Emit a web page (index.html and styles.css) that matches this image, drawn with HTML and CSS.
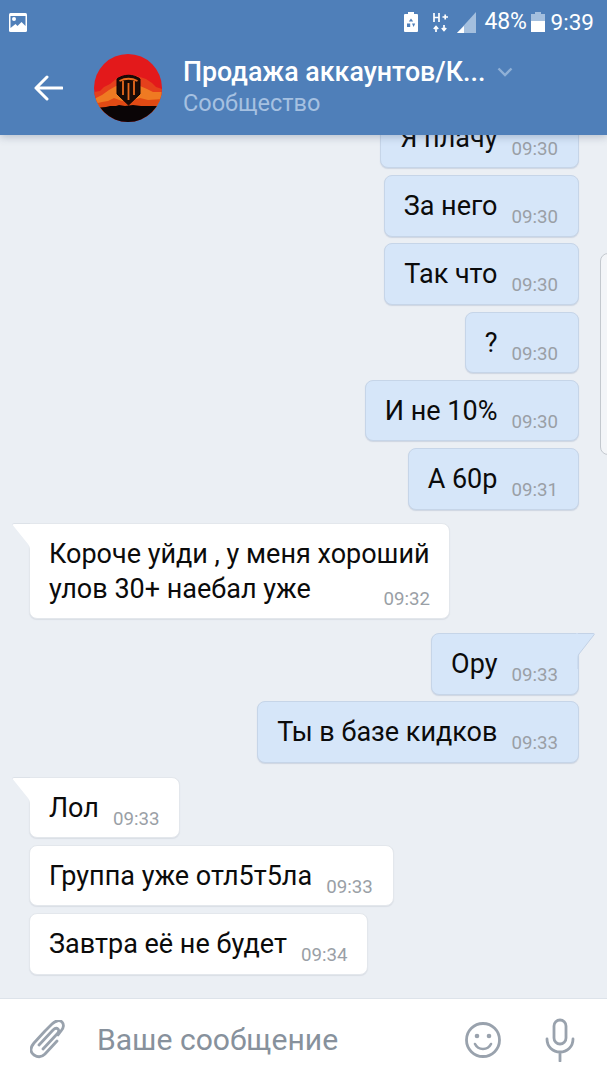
FILE: index.html
```html
<!DOCTYPE html>
<html lang="ru">
<head>
<meta charset="utf-8">
<title>Продажа аккаунтов</title>
<link rel="stylesheet" href="styles.css">
</head>
<body>
<div class="app">
  <header class="top">
    <div class="status">
      <svg class="st-pic" width="18" height="19" viewBox="0 0 18 19"><rect width="18" height="19" rx="1.5" fill="#fff"/><path d="M1.500 3h15v10l-4-4-4 4-2-2-5 4z" fill="#4f7fb9"/><circle cx="5" cy="6" r="2" fill="#fff"/></svg>
      <span class="st-right">
        <svg class="st-save" width="14" height="20" viewBox="0 0 14 20"><path d="M4 0h6v2h3a1 1 0 0 1 1 1v16a1 1 0 0 1-1 1H1a1 1 0 0 1-1-1V3a1 1 0 0 1 1-1h3z" fill="#fff"/><path d="M7 6.500l2.200 3H4.800zM3 11.500h3.200v3.500H3zM8 11.500h3.200L9.600 15z" fill="#4f7fb9"/></svg>
        <svg class="st-net" width="15" height="20" viewBox="0 0 15 20"><path d="M1 1v9M6 1v9M1 5.500h5M9.500 5h5.500M12.200 2.500v5" stroke="#fff" stroke-width="1.700" fill="none"/><path d="M3 20v-5M.8 17L3 14.500 5.200 17M11 13v5M8.800 16l2.200 2.500 2.200-2.500" stroke="#fff" stroke-width="1.700" fill="none"/></svg>
        <svg class="st-sig" width="19" height="21" viewBox="0 0 19 21"><path d="M19 0v21H0z" fill="#a4bfde"/><path d="M0 21l7-7v7z" fill="#fff"/></svg>
        <span class="st-pct">48%</span>
        <svg class="st-bat" width="14" height="20" viewBox="0 0 14 20"><path d="M4 0h6v2h4v18H0V2h4z" fill="#a4bfde"/><rect y="9" width="14" height="11" fill="#fff"/></svg>
        <span class="st-time">9:39</span>
      </span>
    </div>
    <div class="bar">
      <svg class="back" width="30" height="26" viewBox="0 0 30 26"><path d="M29 13H3M14 2L3 13l11 11" stroke="#fff" stroke-width="3" fill="none" stroke-linecap="round" stroke-linejoin="round"/></svg>
      <svg class="avatar" width="68" height="68" viewBox="0 0 68 68">
        <defs><clipPath id="c"><circle cx="34" cy="34" r="34"/></clipPath></defs>
        <g clip-path="url(#c)">
          <rect width="68" height="68" fill="#e3191b"/>
          <path d="M0 38l6-1 4-4 6-3 6-5 8-3 8-1 8 2 6 2 6 4 4 4 6 2v30H0z" fill="#e5401c"/>
          <path d="M0 45l8-4 7-5 7-4 24 0 7 3 6 3 9 0v20H0z" fill="#ef7a22"/>
          <path d="M0 50l8-2 6-1 6-3 8 3 10-1 8-2 8 2 14-1v12H0z" fill="#e04a14"/>
          <path d="M0 54l12-1 4-1 6 0 3-1 6 1 8-1 8 1 21 0v16H0z" fill="#0a0506"/>
          <path d="M23 25c7-5 16-5 23 0v15L34.500 51 23 40z" fill="#1a0b06" stroke="#0a0506" stroke-width="1"/>
          <path d="M25.500 27c6-3 12-3 18 0M29 27v14M40 27v14M34.500 29v17" stroke="#ea6a1e" stroke-width="1.800" fill="none"/>
        </g>
      </svg>
      <div class="titles">
        <div class="title-row">
          <span class="title">Продажа аккаунтов/К...</span>
          <svg class="chev" width="16" height="10" viewBox="0 0 16 10"><path d="M1.500 1.500L8 8l6.500-6.500" stroke="#8fb0d6" stroke-width="2.400" fill="none"/></svg>
        </div>
        <div class="sub">Сообщество</div>
      </div>
    </div>
  </header>

  <main class="chat">
    <div class="msg out"><span class="txt">Я плачу</span><span class="tm">09:30</span></div>
    <div class="msg out"><span class="txt">За него</span><span class="tm">09:30</span></div>
    <div class="msg out"><span class="txt">Так что</span><span class="tm">09:30</span></div>
    <div class="msg out"><span class="txt">?</span><span class="tm">09:30</span></div>
    <div class="msg out"><span class="txt">И не 10%</span><span class="tm">09:30</span></div>
    <div class="msg out"><span class="txt">А 60р</span><span class="tm">09:31</span></div>

    <div class="msg in first multi">
      <svg class="tail tail-in" width="20" height="36" viewBox="0 0 20 36"><path d="M18 1H1.500c-.8 0-1 .6-.6 1.200L16 21c1 1.500 2 3 2 6v9h2V1z" fill="#fff"/><path d="M18 .5H1.500c-.8 0-1 .6-.6 1.200" stroke="#dde2e8" fill="none"/></svg>
      <span class="txt">Короче уйди , у меня хороший<br>улов 30+ наебал уже</span><span class="tm">09:32</span>
    </div>

    <div class="msg out first">
      <svg class="tail tail-out" width="20" height="36" viewBox="0 0 20 36"><path d="M2 .500h15.500c.8 0 1 .6.600 1.200L3 21c-1 1.500-1 3-1 6v9H0V.500z" fill="#d6e6f9"/><path d="M2 .500h15.500c.8 0 1 .6.600 1.200L3 21c-1 1.500-1 3-1 6v9" fill="none" stroke="#c3d2e6"/></svg>
      <span class="txt">Ору</span><span class="tm">09:33</span>
    </div>
    <div class="msg out"><span class="txt">Ты в базе кидков</span><span class="tm">09:33</span></div>

    <div class="msg in first">
      <svg class="tail tail-in" width="20" height="36" viewBox="0 0 20 36"><path d="M18 1H1.500c-.8 0-1 .6-.6 1.200L16 21c1 1.500 2 3 2 6v9h2V1z" fill="#fff"/><path d="M18 .5H1.500c-.8 0-1 .6-.6 1.200" stroke="#dde2e8" fill="none"/></svg>
      <span class="txt">Лол</span><span class="tm">09:33</span>
    </div>
    <div class="msg in"><span class="txt">Группа уже отл5т5ла</span><span class="tm">09:33</span></div>
    <div class="msg in"><span class="txt">Завтра её не будет</span><span class="tm">09:34</span></div>

    <div class="handle"></div>
  </main>

  <footer class="composer">
    <svg class="clip" width="36" height="40" viewBox="0 0 36 40"><path d="M16 12L5 24c-5 6-3 10 0 12s7 3 11-1l12-13M10 26L24 11c2-2 4-2 5-1s1 3-1 5L14 30M16 12l7-7c4-4 8-4 10-2s2 6-1 9l-3 4" stroke="#99a2ad" stroke-width="2.800" fill="none" stroke-linecap="round" transform="translate(-1 -1)"/></svg>
    <span class="ph">Ваше сообщение</span>
    <svg class="smile" width="38" height="38" viewBox="0 0 38 38"><circle cx="19" cy="19" r="16.500" stroke="#99a2ad" stroke-width="2.800" fill="none"/><circle cx="13" cy="15" r="2.300" fill="#99a2ad"/><circle cx="25" cy="15" r="2.300" fill="#99a2ad"/><path d="M11 23c2 4 5 5 8 5s6-1 8-5" stroke="#99a2ad" stroke-width="2.600" fill="none" stroke-linecap="round"/></svg>
    <svg class="mic" width="32" height="44" viewBox="0 0 32 44"><rect x="10" y="2" width="12" height="24" rx="6" stroke="#99a2ad" stroke-width="2.800" fill="none"/><path d="M3 21c0 8 6 13 13 13s13-5 13-13M16 34v9" stroke="#99a2ad" stroke-width="2.800" fill="none" stroke-linecap="round"/></svg>
  </footer>
</div>
</body>
</html>
```

FILE: styles.css
```css
* { box-sizing: border-box; }
html, body { margin: 0; padding: 0; }
body { width: 607px; height: 1080px; overflow: hidden; font-family: Roboto, "Noto Sans", sans-serif; background: #ebeff4; }
.app { width: 607px; height: 1080px; display: flex; flex-direction: column; position: relative; }

.top { height: 135px; background: #4f7fb9; box-shadow: 0 2px 8px rgba(60,80,110,.3); position: relative; z-index: 2; flex: none; display: flex; flex-direction: column; }
.status { height: 44px; display: flex; align-items: center; justify-content: space-between; padding: 0 13px 0 9px; color: #fff; }
.st-right { display: flex; align-items: center; }
.st-save { margin-right: 15px; }
.st-net { margin-right: 9px; }
.st-sig { margin-right: 9px; }
.st-pct { font-size: 23px; line-height: 28px; margin-right: 4px; letter-spacing: -.2px; }
.st-time { font-size: 22.500px; line-height: 28px; }
.st-bat { margin-right: 6px; }

.bar { flex: 1; display: flex; align-items: center; padding: 0 0 3px 33px; }
.back { flex: none; margin-right: 31px; }
.avatar { flex: none; margin-right: 21px; }
.titles { display: flex; flex-direction: column; padding-bottom: 3px; }
.title-row { display: flex; align-items: center; height: 32px; }
.title { font-size: 26.800px; font-weight: 500; color: #fff; }
.chev { margin-left: 12px; }
.sub { font-size: 23.500px; line-height: 30px; color: #a6c1e1; }

.chat { flex: 1; min-height: 0; overflow: hidden; position: relative; display: flex; flex-direction: column; justify-content: flex-end; padding: 0 28px 23.500px 29px; gap: 6.750px; }
.msg { position: relative; height: 61.500px; flex: none; display: flex; align-items: flex-start; padding: 13px 20px 0 19px; border-radius: 8px; font-size: 27px; line-height: 34px; color: #0b0b0b; }
.txt { white-space: nowrap; }
.out { align-self: flex-end; background: #d6e6f9; border: 1px solid #c6d5e8; box-shadow: 0 1px 1px rgba(120,140,170,.25); }
.in { align-self: flex-start; background: #fff; border: 1px solid #e3e7ec; box-shadow: 0 1px 1px rgba(120,130,150,.15); }
.first { margin-top: 7px; }
.multi { height: 96px; width: 421px; padding-top: 13px; display: block; }
.multi .txt { display: block; line-height: 35px; }
.tm { font-size: 18.700px; line-height: 22px; color: #9a9fa6; margin: 17px 0 0 14px; }
.multi .tm { position: absolute; right: 19px; bottom: 8px; margin: 0; }
.first.in { border-top-left-radius: 0; }
.first.out { border-top-right-radius: 0; }
.tail { position: absolute; top: -1px; }
.tail-in { left: -18px; }
.tail-out { right: -18px; }

.handle { position: absolute; right: -8px; top: 118px; width: 15px; height: 202px; border: 1px solid #c3c8ce; border-radius: 8px 0 0 8px; background: #f3f5f8; }

.composer { height: 82px; flex: none; background: #fff; border-top: 1px solid #dde3ea; display: flex; align-items: center; padding: 0 31px 0 30px; position: relative; z-index: 1; }
.clip { flex: none; margin-right: 31px; }
.ph { flex: 1; font-size: 30.100px; color: #87919c; }
.smile { flex: none; margin-right: 42px; }
.mic { flex: none; }
```
